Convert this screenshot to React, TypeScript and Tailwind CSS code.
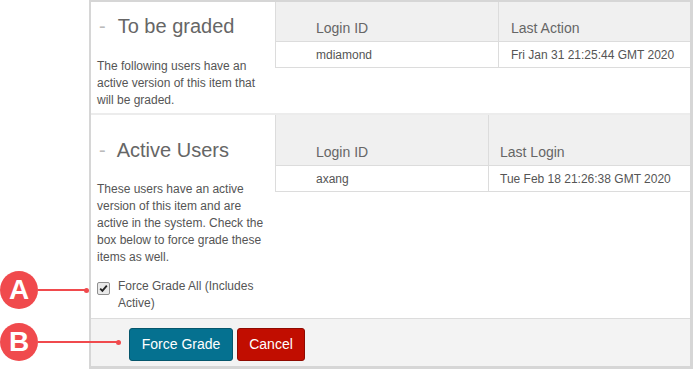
import React from "react";

function Annot({ letter, top, lineEnd }: { letter: string; top: number; lineEnd: number }) {
  return (
    <div className="absolute left-0 flex items-center" style={{ top }}>
      <div className="w-[38px] h-[38px] rounded-full bg-[#f04a4d] flex items-center justify-center text-white text-[28px] font-bold leading-none">
        {letter}
      </div>
      <div className="h-[2px] bg-[#f04a4d]" style={{ width: lineEnd - 38 - 2 }} />
      <div className="w-[5px] h-[5px] rounded-full bg-[#f04a4d] -ml-[3px]" />
    </div>
  );
}

export default function App() {
  return (
    <div className="relative w-[693px] h-[369px] bg-white overflow-hidden flex font-['Liberation_Sans',Arial,sans-serif]">
      <div className="w-[89px] shrink-0" />
      <div className="w-[604px] h-[369px] flex flex-col border-l-2 border-t-2 border-r-[3px] border-b-[3px] border-[#d6d6d6]">
        {/* Section 1 */}
        <div className="h-[113px] flex border-b-2 border-[#ececec]">
          <div className="w-[184px] shrink-0 px-[6px] pt-[12px]">
            <h2 className="text-[20px] leading-[24px] text-[#666] flex">
              <span className="text-[#bbb] ml-[2px] mr-[12px]">-</span>To be graded
            </h2>
            <p className="mt-[20px] text-[12px] leading-[17px] text-[#555]">
              The following users have an active version of this item that will be graded.
            </p>
          </div>
          <div className="flex-1 self-start border-l border-[#dcdcdc]">
            <div className="flex h-[40px] bg-[#f0f0f0] border-b border-[#dcdcdc] text-[14px] leading-[16px] text-[#666]">
              <div className="w-[223px] border-r border-[#dcdcdc] pl-[40px] flex items-end pb-[5px]">Login ID</div>
              <div className="flex-1 pl-[12px] flex items-end pb-[5px]">Last Action</div>
            </div>
            <div className="flex h-[26px] border-b border-[#dcdcdc] text-[12px] text-[#555]">
              <div className="w-[223px] border-r border-[#dcdcdc] pl-[40px] flex items-center">mdiamond</div>
              <div className="flex-1 pl-[12px] flex items-center">Fri Jan 31 21:25:44 GMT 2020</div>
            </div>
          </div>
        </div>
        {/* Section 2 */}
        <div className="flex-1 flex border-b border-[#dcdcdc]">
          <div className="w-[184px] shrink-0 px-[6px] pt-[23px]">
            <h2 className="text-[20px] leading-[24px] text-[#666] flex">
              <span className="text-[#bbb] ml-[2px] mr-[11px]">-</span>Active Users
            </h2>
            <p className="mt-[19px] text-[12px] leading-[17px] text-[#555]">
              These users have an active version of this item and are active in the system. Check the box below to force grade these items as well.
            </p>
            <label className="mt-[12px] flex text-[12px] leading-[17px] text-[#555]">
              <span className="mt-[4px] w-[13px] h-[13px] shrink-0 rounded-[2px] border border-[#8f8f8f] bg-[#e9e9e9] flex items-center justify-center">
                <svg width="9" height="9" viewBox="0 0 9 9">
                  <path d="M1.2 4.6 L3.4 6.9 L7.8 1.6" fill="none" stroke="#222" strokeWidth="1.8" />
                </svg>
              </span>
              <span className="ml-[8px]">Force Grade All (Includes Active)</span>
            </label>
          </div>
          <div className="flex-1 self-start border-l border-[#dcdcdc]">
            <div className="flex h-[51px] bg-[#f0f0f0] border-b border-[#dcdcdc] text-[14px] leading-[16px] text-[#666]">
              <div className="w-[213px] border-r border-[#dcdcdc] pl-[40px] flex items-end pb-[5px]">Login ID</div>
              <div className="flex-1 pl-[11px] flex items-end pb-[5px]">Last Login</div>
            </div>
            <div className="flex h-[26px] border-b border-[#dcdcdc] text-[12px] text-[#555]">
              <div className="w-[213px] border-r border-[#dcdcdc] pl-[40px] flex items-center">axang</div>
              <div className="flex-1 pl-[11px] flex items-center">Tue Feb 18 21:26:38 GMT 2020</div>
            </div>
          </div>
        </div>
        {/* Footer */}
        <div className="h-[47px] bg-[#f3f3f3] flex items-start pt-[9px] gap-[4px] pl-[38px]">
          <button className="h-[33px] w-[104px] rounded-[3px] border border-[#05566c] bg-[#057190] text-white text-[14px]">
            Force Grade
          </button>
          <button className="h-[33px] w-[68px] rounded-[3px] border border-[#8f0a00] bg-[#c10d00] text-white text-[14px]">
            Cancel
          </button>
        </div>
      </div>
      <Annot letter="A" top={271} lineEnd={89} />
      <Annot letter="B" top={323} lineEnd={121} />
    </div>
  );
}
